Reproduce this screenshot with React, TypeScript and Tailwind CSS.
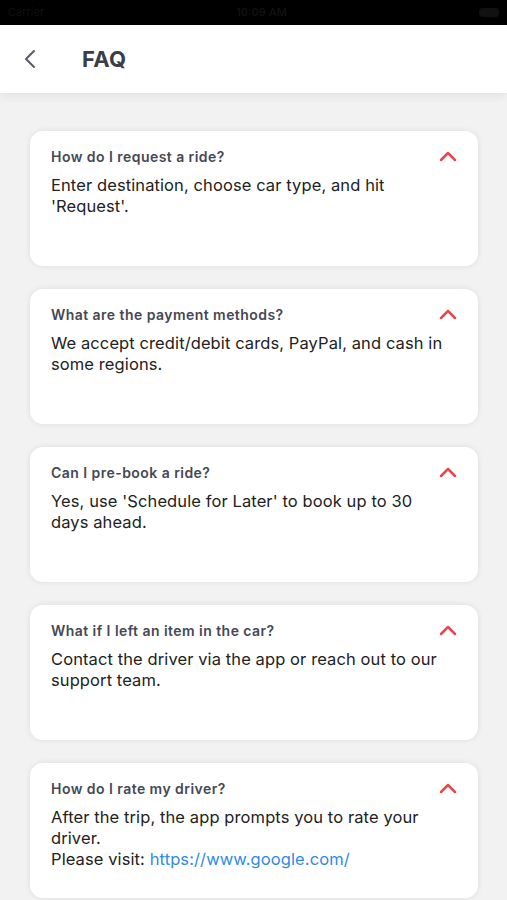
import React from 'react';

type Faq = { q: string; a: React.ReactNode };

const faqs: Faq[] = [
  { q: 'How do I request a ride?', a: "Enter destination, choose car type, and hit 'Request'." },
  { q: 'What are the payment methods?', a: 'We accept credit/debit cards, PayPal, and cash in some regions.' },
  { q: 'Can I pre-book a ride?', a: "Yes, use 'Schedule for Later' to book up to 30 days ahead." },
  { q: 'What if I left an item in the car?', a: 'Contact the driver via the app or reach out to our support team.' },
  {
    q: 'How do I rate my driver?',
    a: (
      <>
        After the trip, the app prompts you to rate your driver.
        <br />
        Please visit: <span className="text-[#2f8be6]">https://www.google.com/</span>
      </>
    ),
  },
];

const ChevronUp = () => (
  <svg width="18" height="12" viewBox="0 0 18 12" fill="none">
    <path d="M2 10 L9 3 L16 10" stroke="#e5484d" strokeWidth="2.5" strokeLinecap="round" strokeLinejoin="round" />
  </svg>
);

const App: React.FC = () => {
  return (
    <div className="h-[900px] overflow-hidden bg-[#f2f2f2] font-['Inter','Liberation_Sans',sans-serif]">
      {/* status bar */}
      <div className="h-[25px] bg-black flex items-center justify-between px-2 text-[11px] text-[#111]">
        <span>Carrier</span>
        <span className="font-semibold">10:09 AM</span>
        <span className="w-[20px] h-[9px] rounded-sm bg-[#111]" />
      </div>

      {/* header */}
      <div className="relative z-10 h-[68px] bg-white flex items-center shadow-[0_4px_8px_rgba(0,0,0,0.06)]">
        <button className="pl-[22px] pr-[44px] flex items-center">
          <svg width="16" height="20" viewBox="0 0 16 20" fill="none">
            <path d="M12 2 L4 10 L12 18" stroke="#555a66" strokeWidth="2" strokeLinecap="round" strokeLinejoin="round" />
          </svg>
        </button>
        <h1 className="text-[22px] font-bold text-[#3b3d4a] tracking-[0.3px]">FAQ</h1>
      </div>

      {/* list */}
      <div className="flex flex-col gap-[23px] pt-[38px] pl-[30px] pr-[29px]">
        {faqs.map((f) => (
          <div
            key={f.q}
            className="min-h-[135px] bg-white rounded-[13px] shadow-[0_0_6px_rgba(0,0,0,0.09)] pl-[21px] pr-[20px] pt-[17px] pb-[20px]"
          >
            <div className="flex items-start justify-between">
              <p className="text-[14px] leading-[18px] font-semibold tracking-[0.45px] text-[#464855]">{f.q}</p>
              <div className="pt-[2px] pr-[1px]">
                <ChevronUp />
              </div>
            </div>
            <p className="mt-[9px] pr-[6px] text-[16.5px] leading-[21px] tracking-[0.1px] text-[#222]">{f.a}</p>
          </div>
        ))}
      </div>
    </div>
  );
};

export default App;
